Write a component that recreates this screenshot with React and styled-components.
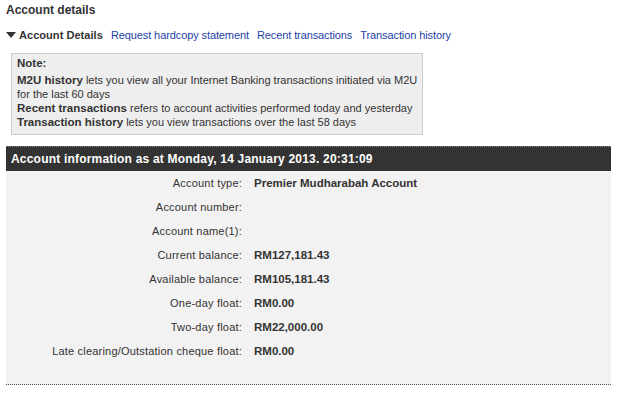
import React from "react";
import styled, { createGlobalStyle } from "styled-components";

const Global = createGlobalStyle`
  html, body { margin: 0; padding: 0; background: #fff; }
  body { font-family: "Liberation Sans", Arial, sans-serif; font-size: 11px; color: #333; }
  b { font-size: 11.5px; }
`;

const Page = styled.div`
  width: 605px;
  padding: 3px 0 0 6px;
`;

const Title = styled.h1`
  margin: 0;
  font-size: 12px;
  font-weight: bold;
  line-height: 15px;
  color: #333;
`;

const Tabs = styled.div`
  display: flex;
  align-items: center;
  gap: 8px;
  margin-top: 10px;
  line-height: 15px;
`;

const Current = styled.span`
  display: flex;
  align-items: center;
  gap: 3px;
  font-weight: bold;
  font-size: 11px;
  letter-spacing: 0.05px;
  color: #333;
`;

const Tab = styled.a`
  color: #1d3fa8;
  text-decoration: none;
  letter-spacing: -0.1px;
`;

const Note = styled.div`
  margin: 10px 0 0 5px;
  width: 402px;
  padding: 2px 3px 5px 5px;
  background: #eee;
  border: 1px solid #ccc;
  line-height: 14px;
  color: #333;
`;

const NoteHead = styled.div`
  font-weight: bold;
  font-size: 11.5px;
  margin-bottom: 3px;
`;

const NoteLine = styled.div`
  white-space: nowrap;
`;

const Panel = styled.section`
  margin-top: 11px;
  background: #f2f2f2;
  border-bottom: 1px dotted #555;
  padding-bottom: 21px;
`;

const Header = styled.div`
  background: #333;
  border-top: 1px dotted #888;
  color: #fff;
  font-weight: bold;
  font-size: 12px;
  letter-spacing: 0.2px;
  height: 24px;
  line-height: 24px;
  padding-left: 5px;
`;

const Grid = styled.div`
  display: grid;
  grid-template-columns: 236px 1fr;
  column-gap: 12px;
  grid-auto-rows: 24px;
  align-items: center;
`;

const Label = styled.div`
  text-align: right;
  letter-spacing: 0.2px;
  color: #333;
`;

const Value = styled.div`
  font-weight: bold;
  font-size: 11.5px;
  color: #333;
`;

const rows = [
  ["Account type:", "Premier Mudharabah Account"],
  ["Account number:", ""],
  ["Account name(1):", ""],
  ["Current balance:", "RM127,181.43"],
  ["Available balance:", "RM105,181.43"],
  ["One-day float:", "RM0.00"],
  ["Two-day float:", "RM22,000.00"],
  ["Late clearing/Outstation cheque float:", "RM0.00"],
];

export default function App() {
  return (
    <>
      <Global />
      <Page>
        <Title>Account details</Title>
        <Tabs>
          <Current>
            <svg width="10" height="7" viewBox="0 0 10 7">
              <path d="M0 0 L10 0 L5 6 Z" fill="#333" />
            </svg>
            Account Details
          </Current>
          <Tab href="#">Request hardcopy statement</Tab>
          <Tab href="#">Recent transactions</Tab>
          <Tab href="#">Transaction history</Tab>
        </Tabs>
        <Note>
          <NoteHead>Note:</NoteHead>
          <NoteLine>
            <b>M2U history</b> lets you view all your Internet Banking transactions initiated via M2U
            <br />
            for the last 60 days
          </NoteLine>
          <NoteLine>
            <b>Recent transactions</b> refers to account activities performed today and yesterday
          </NoteLine>
          <NoteLine>
            <b>Transaction history</b> lets you view transactions over the last 58 days
          </NoteLine>
        </Note>
        <Panel>
          <Header>Account information as at Monday, 14 January 2013. 20:31:09</Header>
          <Grid>
            {rows.map(([l, v]) => (
              <React.Fragment key={l}>
                <Label>{l}</Label>
                <Value>{v}</Value>
              </React.Fragment>
            ))}
          </Grid>
        </Panel>
      </Page>
    </>
  );
}
